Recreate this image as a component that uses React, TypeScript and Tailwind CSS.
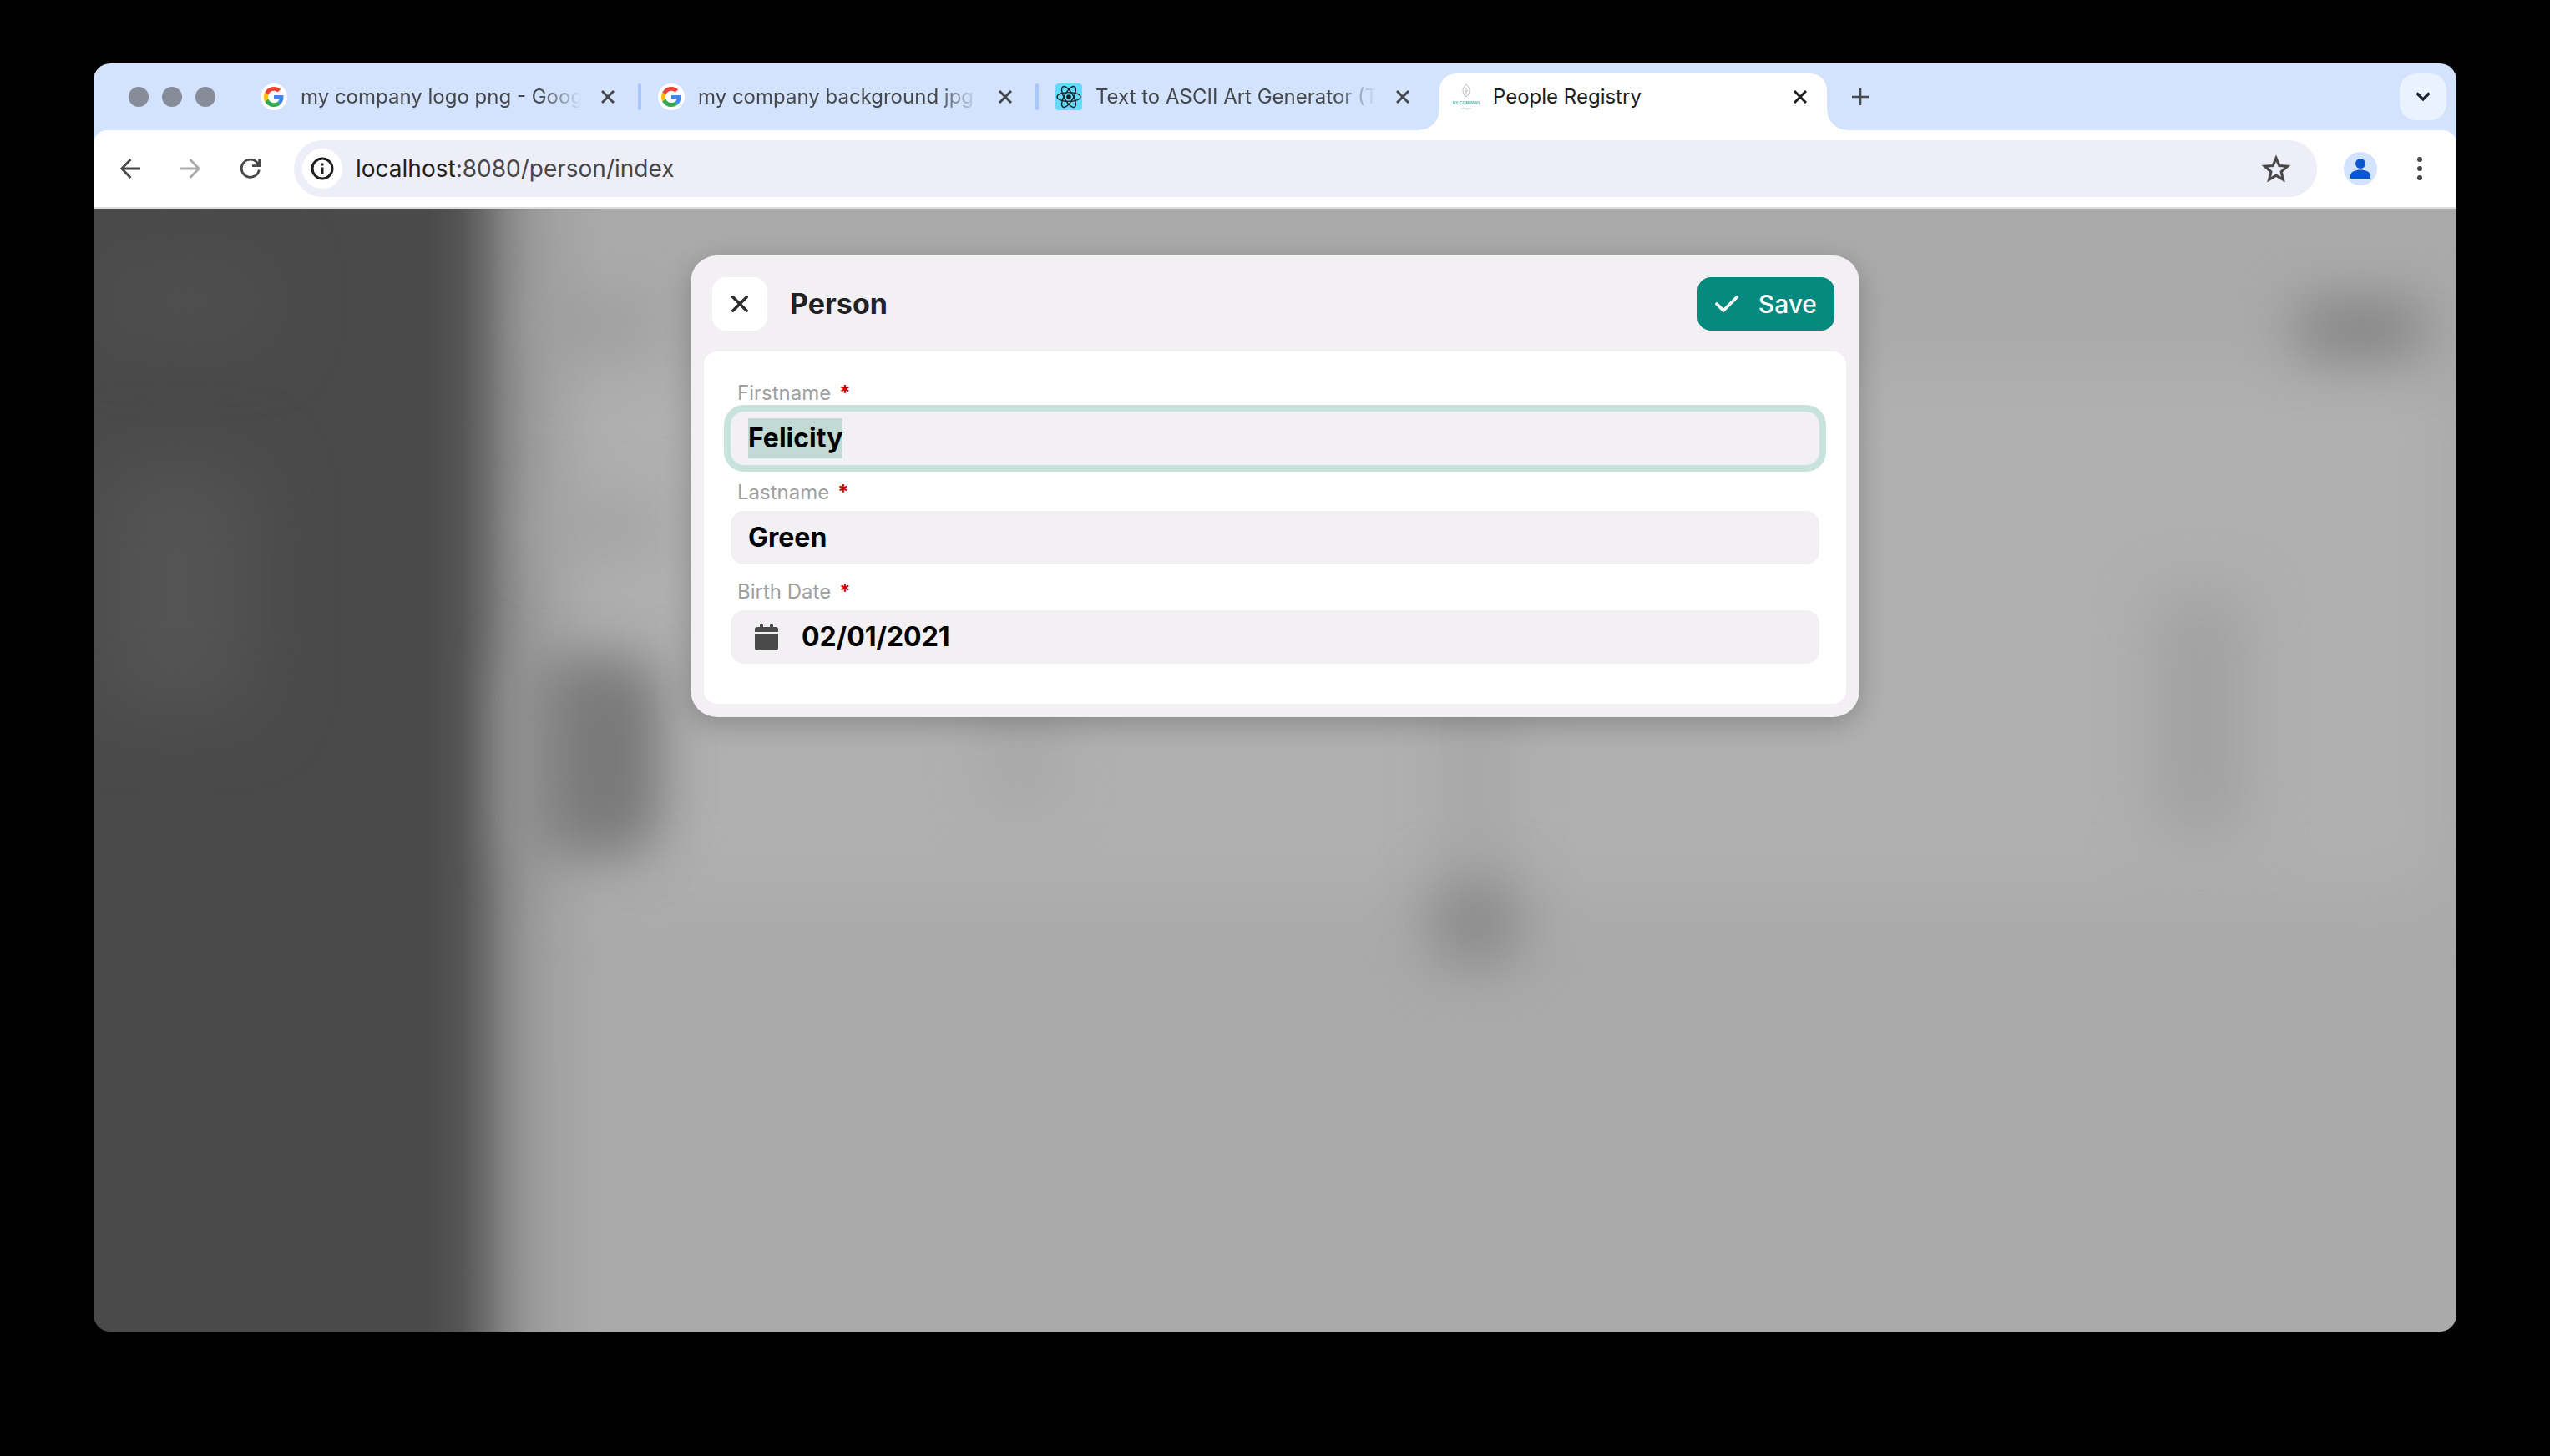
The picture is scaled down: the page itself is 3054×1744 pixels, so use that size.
import { useEffect, useRef } from "react";
import type { ReactNode } from "react";

function GoogleIcon() {
  return (
    <span className="flex size-8 shrink-0 items-center justify-center rounded-full bg-white">
      <svg viewBox="0 0 48 48" className="size-6" aria-hidden="true">
        <path fill="#EA4335" d="M24 9.5c3.54 0 6.71 1.22 9.21 3.6l6.85-6.85C35.9 2.38 30.47 0 24 0 14.62 0 6.51 5.38 2.56 13.22l7.98 6.19C12.43 13.72 17.74 9.5 24 9.5z" />
        <path fill="#4285F4" d="M46.98 24.55c0-1.57-.15-3.09-.38-4.55H24v9.02h12.94c-.58 2.96-2.26 5.48-4.78 7.18l7.73 6c4.51-4.18 7.09-10.36 7.09-17.65z" />
        <path fill="#FBBC05" d="M10.53 28.59c-.48-1.45-.76-2.99-.76-4.59s.27-3.14.76-4.59l-7.98-6.19C.92 16.46 0 20.12 0 24c0 3.88.92 7.54 2.56 10.78l7.97-6.19z" />
        <path fill="#34A853" d="M24 48c6.48 0 11.93-2.13 15.89-5.81l-7.73-6c-2.15 1.45-4.92 2.3-8.16 2.3-6.26 0-11.57-4.22-13.47-9.91l-7.98 6.19C6.51 42.62 14.62 48 24 48z" />
      </svg>
    </span>
  );
}

function ReactIcon() {
  return (
    <svg viewBox="0 0 32 32" className="size-8 shrink-0" aria-hidden="true">
      <rect width="32" height="32" rx="4" fill="#61dafb" />
      <circle cx="16" cy="16" r="2.8" fill="#1c1e21" />
      <g fill="none" stroke="#1c1e21" strokeWidth="1.4">
        <ellipse cx="16" cy="16" rx="14" ry="5.4" />
        <ellipse cx="16" cy="16" rx="14" ry="5.4" transform="rotate(60 16 16)" />
        <ellipse cx="16" cy="16" rx="14" ry="5.4" transform="rotate(120 16 16)" />
      </g>
    </svg>
  );
}

function CompanyIcon() {
  return (
    <svg viewBox="0 0 32 32" className="size-8 shrink-0" aria-hidden="true">
      <g fill="none" stroke="#b9bdbd" strokeWidth="1">
        <path d="M16 1c-3 3-4 5-4 8s2 5 4 7c2-2 4-4 4-7s-1-5-4-8z" />
        <path d="M16 5v9M14 8l2 2 2-2" />
      </g>
      <text x="16" y="25" textAnchor="middle" fontFamily="Liberation Sans, sans-serif" fontSize="5" fontWeight="700" fill="#4fb0ab">MY COMPANY</text>
      <text x="16" y="31" textAnchor="middle" fontFamily="Liberation Sans, sans-serif" fontSize="4" fill="#a9cfcc">slogan</text>
    </svg>
  );
}

function Cross({ className }: { className: string }) {
  return (
    <svg viewBox="0 0 16 16" className={className} fill="none" stroke="currentColor" strokeWidth="3" aria-hidden="true">
      <path d="M1 1l14 14M15 1L1 15" />
    </svg>
  );
}

function Tab({ icon, title, active, divider }: { icon: ReactNode; title: string; active?: boolean; divider?: boolean }) {
  if (active) {
    return (
      <div role="tab" aria-selected="true" className="relative flex h-[68px] w-[464px] items-start self-end rounded-t-[20px] bg-white pt-3 pr-6 pl-4 text-[#1f1f1f]">
        <span className="absolute bottom-0 -left-6 size-6 bg-[radial-gradient(circle_at_0_0,#d3e2fd_23px,#ffffff_24px)]" />
        <span className="absolute -right-6 bottom-0 size-6 bg-[radial-gradient(circle_at_100%_0,#d3e2fd_23px,#ffffff_24px)]" />
        {icon}
        <span className="ml-4 flex-1 text-2xl leading-8 whitespace-nowrap">{title}</span>
        <button type="button" aria-label={`Close ${title}`} className="flex h-8 items-center">
          <Cross className="size-4" />
        </button>
      </div>
    );
  }
  return (
    <div role="tab" aria-selected="false" className="flex h-20 w-[476px] items-start pt-6 pl-4 text-[#45494d]">
      {icon}
      <span className="ml-4 w-[336px] mask-r-from-85% mask-r-to-100% text-2xl leading-8 whitespace-nowrap">{title}</span>
      <button type="button" aria-label={`Close ${title}`} className="ml-6 flex h-8 items-center">
        <Cross className="size-4" />
      </button>
      {divider && <span className="ml-7 h-8 w-1 rounded-sm bg-[#a8c7fa]" />}
    </div>
  );
}

function TabStrip() {
  return (
    <div className="flex h-20 items-center bg-[#d3e2fd]">
      <div className="flex gap-4 pl-[42px]">
        <span className="size-6 rounded-full bg-[#868d99]" />
        <span className="size-6 rounded-full bg-[#868d99]" />
        <span className="size-6 rounded-full bg-[#868d99]" />
      </div>
      <div role="tablist" className="ml-[38px] flex h-20">
        <Tab icon={<GoogleIcon />} title="my company logo png - Goog" divider />
        <Tab icon={<GoogleIcon />} title="my company background jpg" divider />
        <Tab icon={<ReactIcon />} title="Text to ASCII Art Generator (T" />
        <Tab icon={<CompanyIcon />} title="People Registry" active />
      </div>
      <button type="button" aria-label="New tab" className="ml-[30px] text-[#45494d]">
        <svg viewBox="0 0 20 20" className="size-5" fill="none" stroke="currentColor" strokeWidth="2.6" aria-hidden="true">
          <path d="M10 0v20M0 10h20" />
        </svg>
      </button>
      <button type="button" aria-label="Search tabs" className="mr-3 ml-auto flex size-14 items-center justify-center rounded-[20px] bg-[#eaf2ff] text-[#1b222c]">
        <svg viewBox="0 0 18 12" className="h-3 w-[18px]" fill="none" stroke="currentColor" strokeWidth="3.2" aria-hidden="true">
          <path d="M1.5 1.5L9 9l7.5-7.5" />
        </svg>
      </button>
    </div>
  );
}

function Toolbar() {
  return (
    <div className="bg-[#d3e2fd]">
      <div className="flex h-[94px] items-center rounded-t-2xl border-b-2 border-[#dcdddc] bg-white pl-8 text-[#474747]">
        <button type="button" aria-label="Back">
          <svg viewBox="0 0 24 24" className="size-6" fill="none" stroke="currentColor" strokeWidth="2.8" aria-hidden="true">
            <path d="M24 12H2M12.5 1L1.8 12l10.7 11" />
          </svg>
        </button>
        <button type="button" aria-label="Forward" className="ml-12 text-[#ababab]">
          <svg viewBox="0 0 24 24" className="size-6" fill="none" stroke="currentColor" strokeWidth="2.8" aria-hidden="true">
            <path d="M0 12h22M11.5 1l10.7 11-10.7 11" />
          </svg>
        </button>
        <button type="button" aria-label="Reload" className="ml-12">
          <svg viewBox="0 0 24 24" className="size-6" fill="none" stroke="currentColor" strokeWidth="2.8" aria-hidden="true">
            <path d="M22.3 13.5A10.6 10.6 0 1 1 20.5 5.6l2 2.6M22.6 0v8.6H14" />
          </svg>
        </button>
        <div className="ml-10 flex h-[68px] flex-1 items-center rounded-full bg-[#eeeef8] pr-8 pl-2.5">
          <button type="button" aria-label="Site information" className="flex size-12 items-center justify-center rounded-full bg-white text-[#1f1f1f]">
            <svg viewBox="0 0 28 28" className="size-7" fill="none" stroke="currentColor" strokeWidth="3" aria-hidden="true">
              <circle cx="14" cy="14" r="12" />
              <path d="M14 12.5v8M14 7.5v3" />
            </svg>
          </button>
          <div className="ml-4 flex-1 text-[28px] leading-9">
            <span className="text-[#1f1f1f]">localhost</span>:8080/person/index
          </div>
          <button type="button" aria-label="Bookmark this tab">
            <svg viewBox="2 2 20 19" className="h-8 w-[34px]" fill="currentColor" stroke="currentColor" strokeWidth="0.3" aria-hidden="true">
              <path d="M22 9.24l-7.19-.62L12 2 9.19 8.63 2 9.24l5.46 4.73L5.82 21 12 17.27 18.18 21l-1.63-7.03L22 9.24zM12 15.4l-3.76 2.27 1-4.28-3.32-2.88 4.38-.38L12 6.1l1.71 4.04 4.38.38-3.32 2.88 1 4.28L12 15.4z" />
            </svg>
          </button>
        </div>
        <button type="button" aria-label="Profile" className="ml-8">
          <svg viewBox="0 0 40 40" className="size-10" aria-hidden="true">
            <circle cx="20" cy="20" r="20" fill="#d3e2fd" />
            <circle cx="20" cy="14" r="6" fill="#0b57d0" />
            <path d="M8 32v-3.5C8 24 14 21.5 20 21.5S32 24 32 28.5V32z" fill="#0b57d0" />
          </svg>
        </button>
        <button type="button" aria-label="Menu" className="mr-[41px] ml-12">
          <svg viewBox="0 0 6 28" className="h-7 w-1.5" fill="currentColor" aria-hidden="true">
            <circle cx="3" cy="3" r="3" />
            <circle cx="3" cy="14" r="3" />
            <circle cx="3" cy="25" r="3" />
          </svg>
        </button>
      </div>
    </div>
  );
}

/* Dimmed, blurred page that lies behind the dialog. */
function Backdrop() {
  return (
    <div aria-hidden="true" className="absolute inset-0 overflow-hidden bg-[linear-gradient(90deg,#4a4a4a_0,#4a4a4a_400px,#555555_440px,#6b6b6b_468px,#868686_495px,#989898_522px,#a2a2a2_555px,#aaaaaa_610px)]">
      <div className="absolute top-[310px] left-2.5 h-[290px] w-[180px] bg-[#545454] blur-[44px]" />
      <div className="absolute top-[60px] left-2.5 h-[100px] w-[200px] bg-[#4f4f4f] blur-[40px]" />
      <div className="absolute top-[190px] right-5 left-[590px] h-[630px] bg-[#b0b0b0] blur-[40px]" />
      <div className="absolute top-[110px] left-[540px] h-[60px] w-[120px] bg-[#9c9c9c] blur-[34px]" />
      <div className="absolute top-[350px] left-[540px] h-[60px] w-[140px] bg-[#a2a2a2] blur-[34px]" />
      <div className="absolute top-[540px] left-[500px] h-[236px] w-[150px] bg-[#8f8f8f] blur-[32px]" />
      <div className="absolute top-[550px] left-[555px] h-[210px] w-[120px] bg-[#787878] blur-[34px]" />
      <div className="absolute top-[110px] right-10 h-[68px] w-[150px] bg-[#838383] blur-[32px]" />
      <div className="absolute top-[460px] right-[252px] h-[290px] w-[110px] bg-[#a1a1a1] blur-[36px]" />
      <div className="absolute top-[500px] left-[1610px] h-[300px] w-[90px] bg-[#a8a8a8] blur-[30px]" />
      <div className="absolute top-[500px] left-[1060px] h-[220px] w-[100px] bg-[#a9a9a9] blur-[30px]" />
      <div className="absolute top-[804px] left-[1605px] size-[100px] bg-[#888888] blur-[34px]" />
    </div>
  );
}

function Field({ id, label, children }: { id: string; label: string; children: ReactNode }) {
  return (
    <div className="flex flex-col">
      <label htmlFor={id} className="mb-1 flex items-center gap-2.5 px-2 text-2xl leading-9 text-[#a0a0a0]">
        {label} <span className="font-bold text-[#c80000]">*</span>
      </label>
      <div className="flex h-16 items-center rounded-2xl bg-[#f2f0f2] px-[21px] ring-[#c8e3dc] focus-within:ring-8">
        {children}
      </div>
    </div>
  );
}

function PersonDialog() {
  const first = useRef<HTMLInputElement>(null);
  useEffect(() => {
    first.current?.focus();
    first.current?.select();
  }, []);
  return (
    <form role="dialog" aria-labelledby="dialog-title" onSubmit={(e) => e.preventDefault()} className="relative w-full max-w-[1400px] rounded-[32px] bg-[#f2f0f2] px-4 pb-4 shadow-[0_8px_32px_rgba(0,0,0,0.22)]">
      <div className="flex items-center pt-[26px] pr-3.5 pb-[25px] pl-2.5">
        <button type="button" aria-label="Close" className="flex h-16 w-[66px] items-center justify-center rounded-2xl bg-white text-[#2b2b2d]">
          <svg viewBox="0 0 20 20" className="size-5" fill="none" stroke="currentColor" strokeWidth="3.4" strokeLinecap="round" aria-hidden="true">
            <path d="M1.7 1.7l16.6 16.6M18.3 1.7L1.7 18.3" />
          </svg>
        </button>
        <h1 id="dialog-title" className="ml-[27px] flex-1 text-[34px] leading-10 font-bold text-[#222224]">Person</h1>
        <button type="submit" className="flex h-16 items-center gap-6 rounded-2xl bg-[#068a80] px-[21px] text-3xl leading-10 font-medium text-white">
          <svg viewBox="0 0 28 20" className="h-5 w-7" fill="none" stroke="currentColor" strokeWidth="3.8" strokeLinecap="round" strokeLinejoin="round" aria-hidden="true">
            <path d="M2 10l8 8L26 2" />
          </svg>
          Save
        </button>
      </div>
      <div className="flex flex-col gap-[15px] rounded-2xl bg-white px-8 pt-8 pb-12">
        <Field id="firstname" label="Firstname">
          <input
            ref={first}
            id="firstname"
            type="text"
            required
            defaultValue="Felicity"
            className="field-sizing-content h-12 text-[32px] leading-[48px] font-bold text-black outline-none selection:bg-transparent selection:text-black focus:bg-[#c2d9d4]"
          />
        </Field>
        <Field id="lastname" label="Lastname">
          <input id="lastname" type="text" required defaultValue="Green" className="h-12 min-w-0 flex-1 text-[32px] leading-[48px] font-bold text-black outline-none" />
        </Field>
        <Field id="birthdate" label="Birth Date">
          <svg viewBox="0 0 28 32" className="mr-7 ml-2 h-8 w-7 shrink-0 text-[#4a4a4a]" fill="currentColor" aria-hidden="true">
            <path d="M6 4V2a2 2 0 0 1 4 0v2h8V2a2 2 0 0 1 4 0v2h3a3 3 0 0 1 3 3v3H0V7a3 3 0 0 1 3-3zM0 12h28v17a3 3 0 0 1-3 3H3a3 3 0 0 1-3-3z" />
          </svg>
          <input id="birthdate" type="text" required defaultValue="02/01/2021" className="h-12 min-w-0 flex-1 text-[32px] leading-[48px] font-bold text-black outline-none" />
        </Field>
      </div>
    </form>
  );
}

export default function App() {
  return (
    <div className="flex min-h-screen flex-col bg-black px-28 pt-[76px] pb-[149px] font-['Inter','Liberation_Sans',sans-serif]">
      <div className="flex flex-1 flex-col overflow-hidden rounded-[20px]">
        <TabStrip />
        <Toolbar />
        <main className="relative flex flex-1 items-start justify-center px-8 pt-14">
          <Backdrop />
          <PersonDialog />
        </main>
      </div>
    </div>
  );
}
